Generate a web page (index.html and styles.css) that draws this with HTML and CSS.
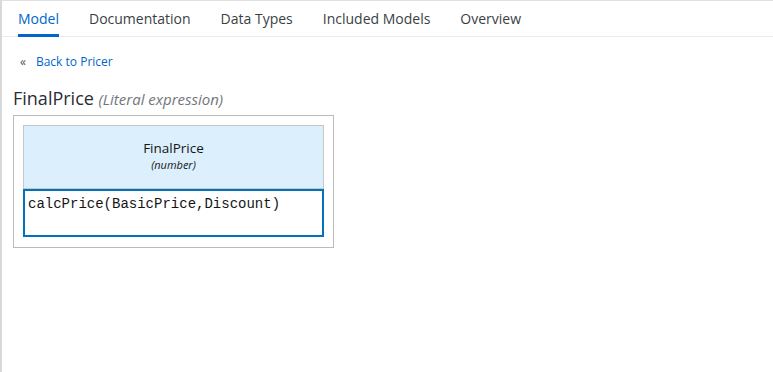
FILE: index.html
```html
<!DOCTYPE html>
<html lang="en">
<head>
  <meta charset="UTF-8" />
  <title>FinalPrice - Literal expression</title>
  <link rel="stylesheet" href="styles.css">
</head>
<body>
  <div class="page">
    <nav class="tabs">
      <a class="tab active" href="#">Model</a>
      <a class="tab" href="#">Documentation</a>
      <a class="tab" href="#">Data Types</a>
      <a class="tab" href="#">Included Models</a>
      <a class="tab" href="#">Overview</a>
    </nav>

    <div class="content">
      <div class="back">
        <span class="back-icon">&laquo;</span>
        <a href="#">Back to Pricer</a>
      </div>

      <h2 class="title">FinalPrice <span class="kind">(Literal expression)</span></h2>

      <div class="grid">
        <div class="grid-header">
          <div class="expr-name">FinalPrice</div>
          <div class="expr-type">(number)</div>
        </div>
        <div class="grid-cell">calcPrice(BasicPrice,Discount)</div>
      </div>
    </div>
  </div>
</body>
</html>
```

FILE: styles.css
```css
html, body {
  margin: 0;
  height: 100%;
}
body {
  font-family: "Open Sans", sans-serif;
  background-color: #fff;
  color: #151515;
}
.page {
  height: 100%;
  box-sizing: border-box;
  border-left: 2px solid #d8d8d8;
  border-top: 1px solid #e0e0e0;
}
.tabs {
  display: flex;
  gap: 30px;
  height: 35px;
  padding-left: 16px;
  border-bottom: 1px solid #ebebeb;
}
.tab {
  display: flex;
  align-items: center;
  font-size: 14px;
  color: #393f44;
  text-decoration: none;
  border-bottom: 3px solid transparent;
  margin-bottom: -1px;
  padding-top: 2px;
}
.tab.active {
  color: #0066cc;
  border-bottom-color: #0066cc;
}
.content {
  padding: 0 11px;
}
.back {
  display: flex;
  align-items: center;
  gap: 10px;
  margin-top: 16px;
  padding-left: 7px;
  font-size: 12px;
}
.back-icon {
  color: #4d5258;
  font-size: 12px;
}
.back a {
  color: #0066cc;
  text-decoration: none;
}
.title {
  margin: 16px 0 5px;
  font-size: 18px;
  font-weight: normal;
  color: #292e34;
}
.kind {
  font-size: 15px;
  font-style: italic;
  color: #72767b;
}
.grid {
  width: 301px;
  padding: 9px 9px 10px;
  border: 1px solid #bbb;
}
.grid-header {
  height: 64px;
  box-sizing: border-box;
  border: 1px solid #c7c7c7;
  background-color: #dbeffc;
  text-align: center;
  padding-top: 13px;
}
.expr-name {
  font-size: 13.5px;
  line-height: 19px;
}
.expr-type {
  font-size: 11px;
  font-style: italic;
  line-height: 14px;
}
.grid-cell {
  height: 48px;
  box-sizing: border-box;
  border: 2px solid #0073bb;
  padding: 5px 3px;
  font-family: "Liberation Mono", monospace;
  font-size: 14px;
  line-height: 16px;
}
```
